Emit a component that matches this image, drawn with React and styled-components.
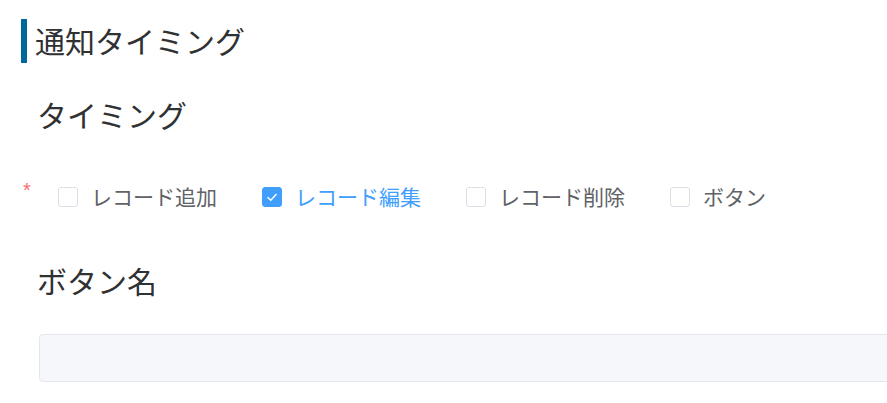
import styled, { createGlobalStyle } from "styled-components";

const GlobalStyle = createGlobalStyle`
  html, body { margin: 0; padding: 0; background: #fff; overflow: hidden; }
  body { font-family: "Noto Sans CJK JP", "Noto Sans", sans-serif; }
`;

const OPTIONS = [
  { label: "レコード追加", checked: false },
  { label: "レコード編集", checked: true },
  { label: "レコード削除", checked: false },
  { label: "ボタン", checked: false },
];

export default function App() {
  return (
    <>
      <GlobalStyle />
      <Page>
        <SectionTitle>
          <Bar />
          <TitleText>通知タイミング</TitleText>
        </SectionTitle>

        <FieldLabel $top={31}>タイミング</FieldLabel>

        <Row>
          <Required>*</Required>
          <Options>
            {OPTIONS.map((o) => (
              <Option key={o.label}>
                <Box $checked={o.checked}>
                  {o.checked && (
                    <svg width="14" height="14" viewBox="0 0 14 14">
                      <polyline points="2.5,7.2 5.8,10.2 11.5,4" fill="none" stroke="#fff" strokeWidth="1.5" />
                    </svg>
                  )}
                </Box>
                <OptionText $checked={o.checked}>{o.label}</OptionText>
              </Option>
            ))}
          </Options>
        </Row>

        <FieldLabel $top={43}>ボタン名</FieldLabel>

        <TextInput readOnly />
      </Page>
    </>
  );
}

/* ===== styles ===== */
const Page = styled.div`
  width: 100vw;
  overflow: hidden;
  padding: 19px 0 21px 21px;
  box-sizing: border-box;
`;

const SectionTitle = styled.div`
  display: flex;
  align-items: stretch;
  height: 44px;
`;

const Bar = styled.div`
  width: 6px;
  background: #00679b;
`;

const TitleText = styled.div`
  margin-left: 8px;
  font-size: 30px;
  line-height: 42px;
  color: #303133;
`;

const FieldLabel = styled.div`
  margin-top: ${({ $top }) => $top}px;
  padding-left: 16px;
  font-size: 30px;
  line-height: 40px;
  color: #303133;
`;

const Row = styled.div`
  margin-top: 43px;
  display: flex;
  align-items: center;
  height: 40px;
`;

const Required = styled.span`
  align-self: flex-start;
  width: 35px;
  padding-left: 2px;
  margin-top: 3px;
  font-family: "Liberation Sans", Arial, sans-serif;
  font-size: 20px;
  line-height: 20px;
  color: #f56c6c;
`;

const Options = styled.div`
  display: flex;
  align-items: center;
  gap: 45px;
`;

const Option = styled.label`
  display: flex;
  align-items: center;
  gap: 13px;
  cursor: pointer;
`;

const Box = styled.span`
  width: 20px;
  height: 20px;
  box-sizing: border-box;
  border-radius: 3px;
  border: 1px solid ${({ $checked }) => ($checked ? "#409eff" : "#dcdfe6")};
  background: ${({ $checked }) => ($checked ? "#409eff" : "#fff")};
  display: flex;
  align-items: center;
  justify-content: center;
`;

const OptionText = styled.span`
  font-size: 21px;
  line-height: 28px;
  margin-top: -2px;
  color: ${({ $checked }) => ($checked ? "#409eff" : "#606266")};
`;

const TextInput = styled.input`
  display: block;
  margin: 34px -20px 0 18px;
  width: calc(100% + 2px);
  height: 48px;
  box-sizing: border-box;
  border: 1px solid #e4e7ed;
  border-radius: 4px;
  background: #f5f7fa;
  outline: none;
`;
